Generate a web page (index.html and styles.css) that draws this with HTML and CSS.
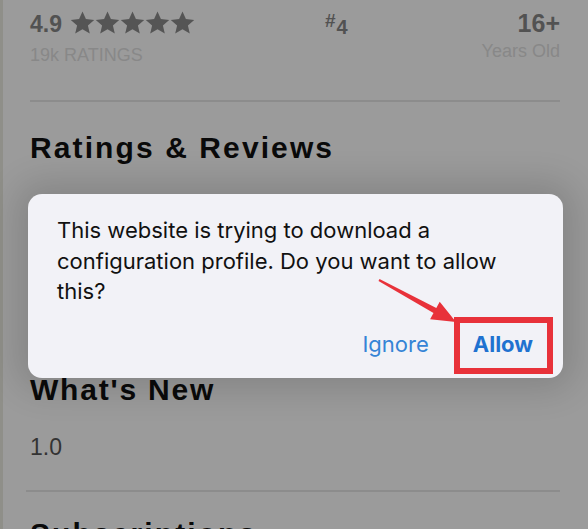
FILE: index.html
```html
<!DOCTYPE html>
<html lang="en">
<head>
    <meta charset="UTF-8">
    <meta name="viewport" content="width=device-width, initial-scale=1.0">
    <title>App Details</title>
    <link rel="stylesheet" href="styles.css">
</head>
<body>

    <div class="page">
        <!-- Top stats -->
        <div class="stats">
            <div class="stat stat-rating">
                <div class="stat-main">
                    4.9
                    <svg class="stars" width="126" height="24" viewBox="0 0 126 24">
                        <defs>
                            <path id="star" d="M12.5 0.5l3.4 7.6 8.3.8-6.3 5.5 1.9 8.2-7.3-4.3-7.3 4.3 1.9-8.2-6.3-5.5 8.3-.8z"/>
                        </defs>
                        <use href="#star" x="0"/>
                        <use href="#star" x="25"/>
                        <use href="#star" x="50"/>
                        <use href="#star" x="75"/>
                        <use href="#star" x="100"/>
                    </svg>
                </div>
                <div class="stat-sub">19k RATINGS</div>
            </div>
            <div class="stat stat-rank"><span class="hash">#</span>4</div>
            <div class="stat stat-age">
                <div class="stat-main">16+</div>
                <div class="stat-sub">Years Old</div>
            </div>
        </div>

        <hr class="divider">

        <h2 class="section-title">Ratings &amp; Reviews</h2>

        <h2 class="section-title whats-new">What's New</h2>
        <p class="version">1.0</p>

        <hr class="divider divider-low">

        <h2 class="section-title subs">Subscriptions</h2>
    </div>

    <!-- Alert dialog -->
    <div class="alert">
        <p class="alert-text">This website is trying to download a configuration profile. Do you want to allow this?</p>
        <div class="alert-actions">
            <span class="alert-btn">Ignore</span>
            <span class="alert-btn alert-btn-main">Allow</span>
        </div>
    </div>

    <!-- Red pointer arrow -->
    <svg class="pointer" width="95" height="60" viewBox="370 270 95 60">
        <polygon points="379.5,279.1 436.3,307.9 439.7,301.7 456,322 430.1,319.3 433.5,313.1 378.5,280.9" fill="#e8323a"/>
    </svg>

</body>
</html>
```

FILE: styles.css
```css
/* Reset default styles */
* {
    box-sizing: border-box;
    margin: 0;
    padding: 0;
}

body {
    font-family: 'Liberation Sans', Arial, sans-serif;
    background: #9b9b9b;
    min-height: 529px;
    position: relative;
    overflow: hidden;
    box-shadow: inset 3px 0 0 #8f8f89;
}

.page {
    padding: 0 28px 0 30px;
}

/* Top stats row */
.stats {
    display: flex;
    height: 100px;
}

.stat-rating {
    flex: 0 0 295px;
    padding-top: 10px;
}

.stat-main {
    display: flex;
    align-items: center;
    gap: 8px;
    font-size: 23px;
    font-weight: bold;
    line-height: 28px;
    color: #525252;
}

.stars {
    fill: #555;
    margin-top: -2px;
}

.stat-sub {
    margin-top: 6px;
    font-size: 18px;
    line-height: 22px;
    color: #888;
}

.stat-rank {
    padding-top: 9px;
    font-size: 20px;
    font-weight: bold;
    line-height: 24px;
    color: #525252;
}

.hash {
    font-size: 19px;
    vertical-align: 7px;
    margin-right: 1px;
}

.stat-age {
    margin-left: auto;
    padding-top: 9px;
    text-align: right;
}

.stat-age .stat-main {
    display: block;
    font-size: 25px;
}

.stat-age .stat-sub {
    margin-top: 3px;
}

/* Dividers */
.divider {
    border: none;
    height: 2px;
    background: #8c8c8c;
}

.divider-low {
    margin: 29px 0 0 -4px;
}

/* Section titles */
.section-title {
    font-size: 30px;
    line-height: 36px;
    font-weight: bold;
    letter-spacing: 2.1px;
    color: #0a0a0a;
    margin-top: 28px;
}

.whats-new {
    margin-top: 206px;
    letter-spacing: 1.8px;
}

.version {
    margin-top: 25px;
    font-size: 23px;
    line-height: 28px;
    color: #333;
}

.subs {
    margin-top: 24px;
}

/* Alert dialog */
.alert {
    position: absolute;
    left: 28px;
    top: 194px;
    width: 535px;
    padding: 21px 10px 4px 29px;
    background: #f2f2f7;
    border-radius: 14px;
    box-shadow: 0 0 34px 12px rgba(0, 0, 0, 0.14);
    font-family: 'Inter', 'Noto Sans', sans-serif;
}

.alert-text {
    font-size: 22px;
    line-height: 30.5px;
    color: #111;
    padding-right: 30px;
}

.alert-actions {
    display: flex;
    justify-content: flex-end;
    align-items: baseline;
    gap: 25px;
    margin-top: 10px;
}

.alert-btn {
    font-size: 22px;
    line-height: 30px;
    color: #3584d6;
}

.alert-btn-main {
    font-weight: 700;
    color: #1f72d0;
    border: 6px solid #e8323a;
    padding: 6px 14px 9px 13px;
}

/* Pointer arrow */
.pointer {
    position: absolute;
    left: 370px;
    top: 270px;
}
```
